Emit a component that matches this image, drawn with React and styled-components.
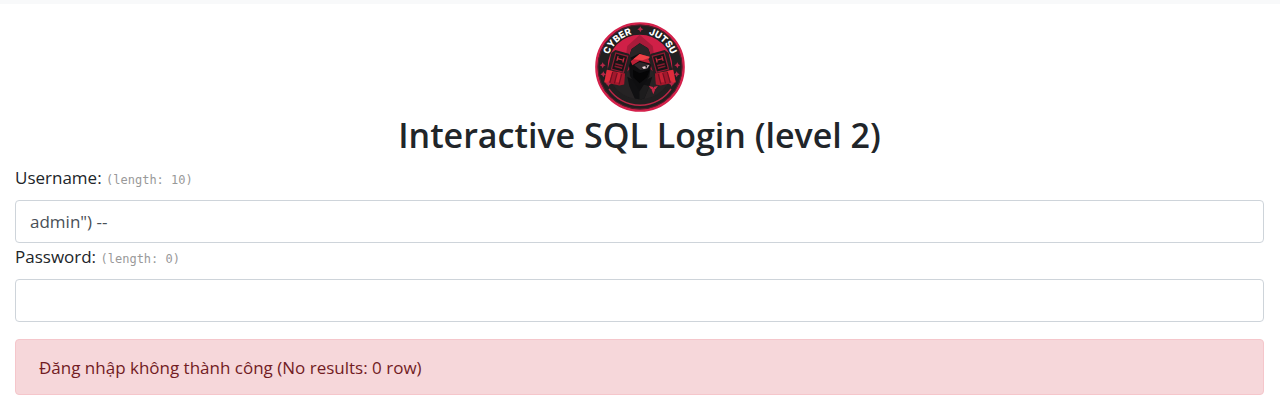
import React, { useState } from "react";
import styled, { createGlobalStyle } from "styled-components";

const GlobalStyle = createGlobalStyle`
  *, *::before, *::after { box-sizing: border-box; }
  body {
    margin: 0;
    background: #fff;
    color: #212529;
    font-family: "Segoe UI", "Open Sans", "Noto Sans", sans-serif;
    font-size: 17px;
    line-height: 27px;
  }
`;

const Page = styled.div`
  border-top: 4px solid #f8f9fa;
`;

const Container = styled.main`
  padding: 18px 16px 14px 15px;
`;

const Header = styled.header`
  display: flex;
  flex-direction: column;
  align-items: center;
  margin-bottom: 8px;
`;

const LogoArt = styled.svg`
  display: block;
  width: 90px;
  height: 90px;
`;

const Title = styled.h1`
  margin: 0;
  padding-top: 2px;
  font-size: 34px;
  font-weight: 600;
  line-height: 42px;
  text-align: center;
`;

const Form = styled.form`
  display: flex;
  flex-direction: column;
`;

const Field = styled.div`
  display: flex;
  flex-direction: column;
`;

const Label = styled.label`
  margin-bottom: 9px;
`;

const Length = styled.code`
  font-family: "DejaVu Sans Mono", monospace;
  font-size: 12px;
  line-height: 1;
  color: #999;
`;

const Input = styled.input`
  width: 100%;
  height: 43px;
  padding: 0 14px;
  border: 1px solid #ced4da;
  border-radius: 4px;
  background: #fff;
  color: #495057;
  font: inherit;
  outline: none;

  &:focus { border-color: #86b7fe; }
`;

const Alert = styled.div`
  margin-top: 17px;
  padding: 14px 23px 13px;
  border: 1px solid #f5c6cb;
  border-radius: 4px;
  background: #f6d7da;
  color: #721c24;
`;

const Glove = () => (
  <g>
    <path d="M-18 -44 L18 -44 L28 -32 L25 14 L-24 14 L-26 -34 Z" fill="#231f20" />
    <path d="M-15 -37 L17 -37 L17 6 L-15 6 Z" fill="#181516" stroke="#8f1b33" strokeWidth="3" />
    <path d="M-7 -31 V-18 M9 -31 V-18 M-7 -24 H9" fill="none" stroke="#c92c40" strokeWidth="3" />
    <path d="M-9 -10 H11 M-9 -3 H11" stroke="#851a2e" strokeWidth="4" />
    <path d="M-26 11 L22 8 L27 36 L16 42 L-24 44 Z" fill="#a3182c" />
    <path d="M-26 11 L-10 10 L-12 44 L-24 44 Z" fill="#de2c3b" />
    <path d="M0 10 L10 9 L14 34 L4 36 Z" fill="#c52134" />
    <path d="M-10 12 V42 M2 12 V40 M14 12 V39" stroke="#6f1022" strokeWidth="3" />
  </g>
);

const Logo = () => (
  <LogoArt viewBox="15 12 270 270" role="img" aria-label="Cyber Jutsu">
    <defs>
      <path id="cyber-arc" d="M49 147 A101 101 0 0 1 251 147" />
      <clipPath id="inner-disc"><circle cx="150" cy="147" r="97" /></clipPath>
    </defs>
    <circle cx="150" cy="147" r="131" fill="#211f20" stroke="#d4214b" strokeWidth="7" />
    <circle cx="150" cy="147" r="126" fill="none" stroke="#741a31" strokeWidth="2" />
    <g clipPath="url(#inner-disc)">
      <rect x="40" y="40" width="220" height="145" fill="#d02047" />
      <path d="M149 50 L112 84 L96 185 L204 185 L188 84 Z" fill="#a81b3a" />
      <path d="M40 185 L260 185 L260 260 L40 260 Z" fill="#242122" />
      <path d="M60 205 L119 154 L182 154 L240 205 L149 275 Z" fill="#262324" />
      <path d="M112 176 L148 196 L187 176 L178 205 L149 275 L118 205 Z" fill="#101012" />
      <path d="M148 196 L178 205 L149 275 Z" fill="#1d1c1d" />
    </g>
    <path d="M149 76 L174 91 L186 122 L178 175 L149 220 L120 174 L115 122 L125 93 Z" fill="#0e0e10" />
    <path d="M149 76 L125 93 L115 122 L149 106 L186 122 L174 91 Z" fill="#292526" />
    <path d="M122 130 L149 108 L183 118 L186 138 L149 128 L127 142 Z" fill="#bd2036" />
    <path d="M149 108 L183 118 L158 127 L130 124 Z" fill="#ee4246" />
    <path d="M132 141 L149 132 L181 140 L173 153 L151 156 Z" fill="#30272b" />
    <path d="M156 147 L178 141 L172 150 L161 153 Z" fill="#f1dbe1" />
    <circle cx="169" cy="146" r="3" fill="#111" />
    <path d="M129 155 L149 166 L179 156 L171 178 L149 196 L130 178 Z" fill="#050506" />
    <g transform="translate(83 151) rotate(15) scale(1.16)"><Glove /></g>
    <g transform="translate(217 151) scale(-1 1) rotate(15) scale(1.16)"><Glove /></g>
    <g fill="#c82746">
      <path d="M176 203 L189 207 L189 216 L183 213 Z" />
      <path d="M204 203 L191 207 L191 216 L197 213 Z" />
      <path d="M185 216 L190 209 L195 216 L190 229 Z" />
    </g>
    <path d="M57 213 A113 113 0 0 0 243 213" fill="none" stroke="#b82745" strokeWidth="4" />
    <g fill="#b82747">
      {[[151, 34], [38, 142], [40, 169], [55, 197], [262, 142], [260, 169], [245, 197]].map(([x, y]) => (
        <path
          key={`${x}-${y}`}
          d={`M${x} ${y - 9} L${x + 3} ${y - 3} L${x + 9} ${y} L${x + 3} ${y + 3} L${x} ${y + 9} L${x - 3} ${y + 3} L${x - 9} ${y} L${x - 3} ${y - 3} Z`}
        />
      ))}
    </g>
    <g fill="#fff" fontFamily="Inter, sans-serif" fontSize="28" fontWeight="800" textAnchor="middle">
      <text><textPath href="#cyber-arc" startOffset="27%">CYBER</textPath></text>
      <text><textPath href="#cyber-arc" startOffset="73%">JUTSU</textPath></text>
    </g>
  </LogoArt>
);

export default function App() {
  const [username, setUsername] = useState('admin") --');
  const [password, setPassword] = useState("");

  return (
    <Page>
      <GlobalStyle />
      <Container>
        <Header>
          <Logo />
          <Title>Interactive SQL Login (level 2)</Title>
        </Header>
        <Form onSubmit={(event) => event.preventDefault()}>
          <Field>
            <Label htmlFor="username">
              Username: <Length>(length: {username.length})</Length>
            </Label>
            <Input id="username" value={username} onChange={(event) => setUsername(event.target.value)} />
          </Field>
          <Field>
            <Label htmlFor="password">
              Password: <Length>(length: {password.length})</Length>
            </Label>
            <Input id="password" value={password} onChange={(event) => setPassword(event.target.value)} />
          </Field>
        </Form>
        <Alert role="alert">Đăng nhập không thành công (No results: 0 row)</Alert>
      </Container>
    </Page>
  );
}
